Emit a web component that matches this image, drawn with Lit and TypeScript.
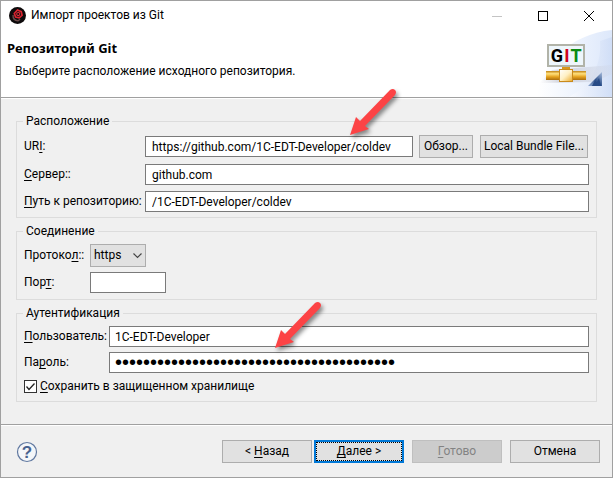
import { LitElement, html, css, svg } from "lit";
import { customElement, property } from "lit/decorators.js";

@customElement("callout-arrow")
class CalloutArrow extends LitElement {
  static styles = css`
    :host { display: block; width: 60px; height: 60px; pointer-events: none; }
    svg { display: block; overflow: visible; filter: drop-shadow(2px 3px 2px rgba(0, 0, 0, 0.45)); }
  `;
  render() {
    return html`<svg width="60" height="60" viewBox="0 0 60 60" aria-hidden="true">
      <path d="M5 50 L11 32 L15 36 L45 5 Q48 3 50 5 Q52 7 50 10 L20 41 L24 44 Z" fill="#fc4345"/>
    </svg>`;
  }
}

@customElement("git-banner")
class GitBanner extends LitElement {
  static styles = css`
    :host { display: block; width: 80px; height: 67px; }
    svg { display: block; }
    .glyph { font: bold 18px Roboto, "Liberation Sans", sans-serif; text-anchor: middle; }
  `;
  render() {
    return html`<svg width="80" height="67" viewBox="0 0 80 67" role="img" aria-label="Git">
      <defs>
        <linearGradient id="sky" x1="0" y1="0" x2="1" y2="0">
          <stop offset="0" stop-color="#fbfcff"/><stop offset="1" stop-color="#cbdaf5"/>
        </linearGradient>
        <linearGradient id="band" x1="0" y1="0" x2="1" y2="0">
          <stop offset="0" stop-color="#fff"/><stop offset="1" stop-color="#dde8fb"/>
        </linearGradient>
        <linearGradient id="gold" x1="0" y1="0" x2="0" y2="1">
          <stop offset="0" stop-color="#c08314"/><stop offset="0.3" stop-color="#ffe07c"/>
          <stop offset="0.65" stop-color="#e5a11d"/><stop offset="1" stop-color="#aa6e10"/>
        </linearGradient>
        <linearGradient id="box" x1="0" y1="0" x2="1" y2="1">
          <stop offset="0" stop-color="#fff"/><stop offset="0.5" stop-color="#fff0c4"/><stop offset="1" stop-color="#eba928"/>
        </linearGradient>
        <linearGradient id="haze" x1="0" y1="0" x2="1" y2="0">
          <stop offset="0" stop-color="#cfcfd6" stop-opacity="0"/><stop offset="0.3" stop-color="#c6c8d2" stop-opacity="0.8"/>
          <stop offset="1" stop-color="#cfd6e6" stop-opacity="0.3"/>
        </linearGradient>
        <linearGradient id="tri" x1="0" y1="1" x2="1" y2="0">
          <stop offset="0" stop-color="#8fa8cf"/><stop offset="0.5" stop-color="#35578f"/><stop offset="1" stop-color="#a9bede"/>
        </linearGradient>
      </defs>
      <path d="M5 67 C8 35 38 4 80 0 V67 Z" fill="url(#band)"/>
      <path d="M37 67 C58 56 70 35 68 11 L80 7 V67 Z" fill="url(#sky)" opacity="0.7"/>
      <path d="M8 53 L20 40 L80 35 V44 L62 52 Z" fill="url(#haze)"/>
      <rect x="16" y="15" width="36" height="21" fill="#eef6fb" stroke="#b1b3a8" stroke-width="2"/>
      <text class="glyph" x="25" y="32" fill="#000">G</text>
      <text class="glyph" x="35" y="32" fill="#d0021b">I</text>
      <text class="glyph" x="44" y="32" fill="#0a8a12">T</text>
      <rect x="30" y="37" width="8" height="4" fill="#d9971c"/>
      <rect x="14" y="41" width="40" height="9" fill="url(#gold)"/>
      <rect x="27.5" y="39.5" width="13" height="12" fill="url(#box)" stroke="#c98a1b"/>
      <path d="M56 56 L70 42 V56 Z" fill="url(#tri)"/>
      <path d="M60 56 L63 50 L65 52 L67 48 L69 56 Z" fill="#264a86"/>
    </svg>`;
  }
}

const appIcon = svg`
  <circle cx="8" cy="8" r="8" fill="#0d0a0b"/>
  <path d="M8 2.8 L11.5 4.4 L12.3 7.8 L9.6 10.2 L6.2 9.4 L5 6 Z" fill="none" stroke="#d8232f" stroke-width="1.6"/>
  <circle cx="8.7" cy="6.6" r="1.5" fill="none" stroke="#e0303a"/>
  <path d="M3.8 7.5 Q3.5 12.5 8.5 13 L10.5 11.5" fill="none" stroke="#6a4a4a" stroke-width="1.3"/>`;

@customElement("app-root")
class AppRoot extends LitElement {
  @property() uri = "https://github.com/1C-EDT-Developer/coldev";
  @property() server = "github.com";
  @property() path = "/1C-EDT-Developer/coldev";
  @property() user = "1C-EDT-Developer";

  static styles = css`
    :host {
      display: block;
      font: 12px/17px Roboto, "Noto Sans", sans-serif;
      color: #000;
    }
    * { box-sizing: border-box; }
    .window {
      position: relative;
      display: flex;
      flex-direction: column;
      min-height: 100vh;
      border: 1px solid #a0a0a0;
      background: #f0f0f0;
    }
    .titlebar {
      display: flex;
      align-items: center;
      height: 29px;
      padding-left: 8px;
      background: #fff;
    }
    .titlebar svg { display: block; }
    .caption { flex: 1; margin-left: 5px; }
    .win-btn {
      display: grid;
      place-items: center;
      width: 46px;
      height: 28px;
      padding: 0;
      border: 0;
      background: none;
    }
    .banner {
      display: flex;
      justify-content: space-between;
      height: 67px;
      background: #fff;
    }
    .heading { padding: 9px 0 0 6px; }
    h1 { margin: 0; font: bold 13px/18px "Noto Sans", "Open Sans", sans-serif; }
    .subtitle { margin: 6px 0 0 8px; }
    .rule { height: 2px; background: #fff; border-top: 1px solid #a0a0a0; }
    main {
      flex: 1;
      display: flex;
      flex-direction: column;
      gap: 5px;
      padding: 14px 15px;
    }
    fieldset {
      min-width: 0;
      margin: 0;
      padding: 4px 7px 6px;
      border: 1px solid #dcdcdc;
    }
    .location { padding: 5px 7px; }
    legend { height: 17px; margin-left: -1px; padding: 0 3px; }
    .rows {
      display: grid;
      grid-template-columns: 60px 1fr;
      gap: 5px 6px;
      align-items: center;
    }
    .location .rows { grid-template-columns: 115px 1fr; row-gap: 6px; }
    .auth .rows { grid-template-columns: 79px 1fr; }
    label { white-space: nowrap; }
    u { text-underline-offset: 2px; }
    .field {
      width: 100%;
      min-width: 0;
      height: 21px;
      padding: 0 6px;
      border: 1px solid #7a7a7a;
      border-radius: 0;
      background: #fff;
      color: inherit;
      font: inherit;
      outline: none;
    }
    .auth .field { padding: 0 5px; }
    .port { width: 76px; }
    .secret { font-family: "Liberation Sans", sans-serif; font-size: 20px; }
    .uri-row { display: flex; align-items: center; }
    .uri-row .field { flex: 1; }
    .btn {
      height: 23px;
      padding: 0;
      border: 1px solid #adadad;
      border-radius: 0;
      background: #e1e1e1;
      color: #000;
      font: inherit;
      line-height: 17px;
      white-space: nowrap;
    }
    .browse { width: 54px; margin: 0 7px 0 6px; }
    .bundle { width: 108px; margin-right: 1px; }
    .combo { display: grid; width: 56px; }
    .combo select, .combo svg { grid-area: 1 / 1; }
    .combo select {
      appearance: none;
      height: 23px;
      padding: 0 3px;
      border: 1px solid #adadad;
      border-radius: 0;
      background: #e1e1e1;
      color: #000;
      font: inherit;
    }
    .combo svg { align-self: center; justify-self: end; margin-right: 4px; pointer-events: none; }
    .save { display: flex; align-items: center; gap: 3px; grid-column: 1 / -1; }
    .tick { display: grid; }
    .tick input, .tick svg { grid-area: 1 / 1; }
    .tick input {
      appearance: none;
      width: 13px;
      height: 13px;
      margin: 0;
      border: 1px solid #333;
      background: #fff;
    }
    .tick svg { visibility: hidden; pointer-events: none; }
    .tick input:checked + svg { visibility: visible; }
    footer {
      display: flex;
      align-items: center;
      padding: 14px 12px 14px 15px;
    }
    .help { margin: 0 auto 0 0; padding: 0; border: 0; background: none; height: 22px; }
    .help svg { display: block; }
    .mark { font: bold 17px "Liberation Sans", sans-serif; text-anchor: middle; }
    .nav { width: 90px; }
    .next {
      margin: 0 8px 0 2px;
      border: 2px solid #0078d7;
      outline: 1px dotted #000;
      outline-offset: -3px;
    }
    .finish { margin-right: 8px; border-color: #bfbfbf; background: #ccc; color: #838383; }
    .arrow-uri { position: absolute; left: 344px; top: 84px; }
    .arrow-password { position: absolute; left: 269px; top: 297px; }
  `;

  render() {
    return html`
      <div class="window">
        <div class="titlebar">
          <svg width="17" height="17" viewBox="0 0 16 16" aria-hidden="true">${appIcon}</svg>
          <span class="caption">Импорт проектов из Git</span>
          <button class="win-btn" aria-label="Свернуть" disabled>
            <svg width="10" height="10"><path d="M0 5.5H10" stroke="#c4c4c4"/></svg>
          </button>
          <button class="win-btn" aria-label="Развернуть">
            <svg width="10" height="10"><rect x="0.5" y="0.5" width="9" height="9" fill="none" stroke="#000"/></svg>
          </button>
          <button class="win-btn" aria-label="Закрыть">
            <svg width="10" height="10"><path d="M0 0L10 10M10 0L0 10" stroke="#000"/></svg>
          </button>
        </div>
        <header class="banner">
          <div class="heading">
            <h1>Репозиторий Git</h1>
            <div class="subtitle">Выберите расположение исходного репозитория.</div>
          </div>
          <git-banner></git-banner>
        </header>
        <div class="rule"></div>
        <main>
          <fieldset class="location">
            <legend>Расположение</legend>
            <div class="rows">
              <label for="uri">UR<u>I</u>:</label>
              <div class="uri-row">
                <input class="field" id="uri" .value=${this.uri}>
                <button class="btn browse">Обзор...</button>
                <button class="btn bundle">Local Bundle File...</button>
              </div>
              <label for="server"><u>С</u>ервер::</label>
              <input class="field" id="server" .value=${this.server}>
              <label for="path"><u>П</u>уть к репозиторию:</label>
              <input class="field" id="path" .value=${this.path}>
            </div>
          </fieldset>
          <fieldset>
            <legend>Соединение</legend>
            <div class="rows">
              <label for="protocol">Протоко<u>л</u>::</label>
              <div class="combo">
                <select id="protocol"><option>https</option></select>
                <svg width="9" height="6" viewBox="0 0 9 6"><path d="M0.5 0.5L4.5 4.5L8.5 0.5" fill="none" stroke="#444" stroke-width="1.2"/></svg>
              </div>
              <label for="port">Пор<u>т</u>:</label>
              <input class="field port" id="port">
            </div>
          </fieldset>
          <fieldset class="auth">
            <legend>Аутентификация</legend>
            <div class="rows">
              <label for="user"><u>П</u>ользователь:</label>
              <input class="field" id="user" .value=${this.user}>
              <label for="password">Па<u>р</u>оль:</label>
              <input class="field secret" id="password" type="password" .value=${"x".repeat(40)}>
              <div class="save">
                <span class="tick">
                  <input id="save" type="checkbox" checked>
                  <svg width="13" height="13" viewBox="0 0 13 13"><path d="M2.5 6.5L5 9.5L10.5 3.5" fill="none" stroke="#222" stroke-width="1.3"/></svg>
                </span>
                <label for="save"><u>С</u>охранить в защищенном хранилище</label>
              </div>
            </div>
          </fieldset>
        </main>
        <div class="rule"></div>
        <footer>
          <button class="help" aria-label="Справка">
            <svg width="22" height="22" viewBox="0 0 22 22">
              <circle cx="11" cy="11" r="9.5" fill="#f4f6f9" stroke="#6078a0" stroke-width="1.2"/>
              <text class="mark" x="11" y="17" fill="#48628f">?</text>
            </svg>
          </button>
          <button class="btn nav">&lt; <u>Н</u>азад</button>
          <button class="btn nav next"><u>Д</u>алее &gt;</button>
          <button class="btn nav finish" disabled><u>Г</u>отово</button>
          <button class="btn nav">Отмена</button>
        </footer>
        <callout-arrow class="arrow-uri"></callout-arrow>
        <callout-arrow class="arrow-password"></callout-arrow>
      </div>
    `;
  }
}
